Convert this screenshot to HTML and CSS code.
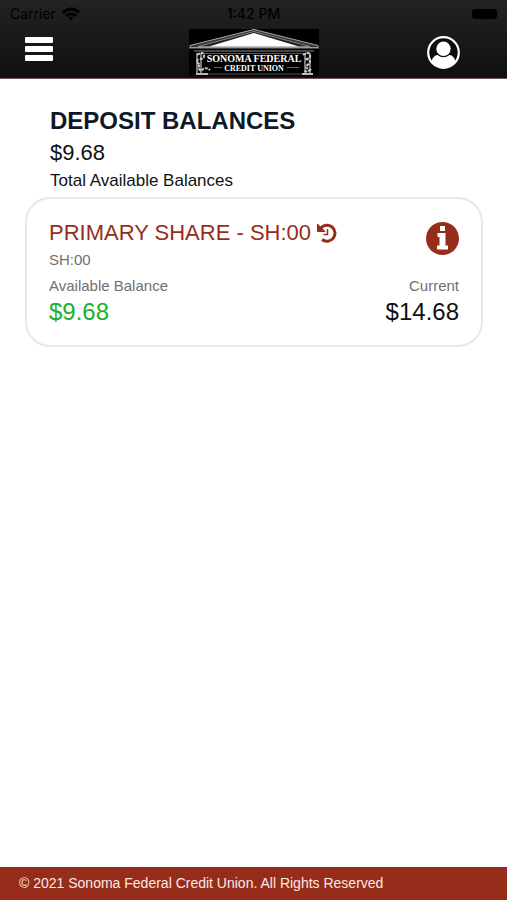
FILE: index.html
```html
<!DOCTYPE html>
<html lang="en">
<head>
    <meta charset="UTF-8">
    <meta name="viewport" content="width=device-width, initial-scale=1.0">
    <title>Sonoma Federal Credit Union</title>
    <link rel="stylesheet" href="styles.css">
</head>
<body>
    <header class="header">
        <div class="status-bar">
            <div class="carrier">
                <span>Carrier</span>
                <svg width="18" height="14" viewBox="0 0 18 14" fill="none" stroke="#000" stroke-width="3">
                    <path d="M1 5.5Q9-1.5 17 5.5"/>
                    <path d="M4 9Q9 4.500 14 9"/>
                    <path d="M6.500 10.500Q9 8.500 11.500 10.500L9 13.500Z" fill="#000" stroke="none"/>
                </svg>
            </div>
            <span class="clock">1:42 PM</span>
            <div class="battery-wrap"><span class="battery"></span></div>
        </div>
        <nav class="nav">
            <button class="icon-btn menu-btn" aria-label="Menu">
                <svg width="28" height="24" viewBox="0 0 28 24" fill="#fff">
                    <rect width="28" height="6" rx="1"/>
                    <rect y="9" width="28" height="6" rx="1"/>
                    <rect y="18" width="28" height="6" rx="1"/>
                </svg>
            </button>
            <a class="logo" href="#" aria-label="Sonoma Federal Credit Union">
                <svg width="130" height="47" viewBox="0 0 130 47">
                    <rect width="130" height="47" fill="#000"/>
                    <path d="M65 .5L1 16.500V18.500H129V16.500Z" fill="#333" stroke="#aaa"/>
                    <path d="M65 2.500L9 17.500H121Z" fill="#222" stroke="#999" stroke-width=".8"/>
                    <path d="M65 4L20 17.500H110Z" fill="#fff"/>
                    <path d="M0 19H130M5 22H125" stroke="#888"/>
                    <path d="M9 24.500H121" stroke="#555"/>
                    <path d="M8 24V44M12 24V44M116 24V44M121 24V44" stroke="#777" stroke-width="2"/>
                    <path d="M8 26q6-4 7 0t-5 4q-5 3 1 5q-3 4 1 7q4-5 9-1M114 26q6-4 7 0t-5 4q7 1 4 5q-6 3 1 6q-4 3-6 0" fill="none" stroke="#ccc" stroke-width="2" stroke-dasharray="3 1"/>
                    <path d="M7 45H19M113 45H124" stroke="#bbb" stroke-width="2"/>
                    <path d="M19 45H113" stroke="#555"/>
                    <path d="M25 38.500H33M98 38.500H110" stroke="#666"/>
                    <text class="logo-name" x="65" y="33">SONOMA FEDERAL</text>
                    <text class="logo-sub" x="65" y="42">CREDIT UNION</text>
                </svg>
            </a>
            <button class="icon-btn profile-btn" aria-label="Profile">
                <svg width="33" height="33" viewBox="0 0 33 33">
                    <circle cx="16.500" cy="16.500" r="15.300" fill="#0c0c0c" stroke="#fff" stroke-width="2.200"/>
                    <circle cx="16.500" cy="12.800" r="7.200" fill="#fff"/>
                    <path d="M4.500 25.500Q6 19.500 10.500 19Q16.500 23.500 22.500 19Q27 19.500 28.500 25.500Q24 31.500 16.500 31.500T4.500 25.500Z" fill="#fff"/>
                </svg>
            </button>
        </nav>
    </header>

    <main class="content">
        <section class="summary">
            <h1>DEPOSIT BALANCES</h1>
            <div class="total">$9.68</div>
            <div class="total-label">Total Available Balances</div>
        </section>

        <section class="card">
            <div class="card-top">
                <div>
                    <a class="account" href="#">
                        PRIMARY SHARE - SH:00
                        <svg width="20" height="20" viewBox="0 0 20 20" fill="none" stroke="currentColor">
                            <path d="M3.500 5.500A8 8 0 1 1 5 16.500" stroke-width="3"/>
                            <path d="M.5 1V8.500H8Z" fill="currentColor" stroke-width="1"/>
                            <path d="M10.500 6V11.500H6.500" stroke-width="1.500"/>
                        </svg>
                    </a>
                    <div class="label">SH:00</div>
                </div>
                <button class="icon-btn info-btn" aria-label="Account details">
                    <svg width="33" height="33" viewBox="0 0 33 33">
                        <circle cx="16.500" cy="16.500" r="16.500" fill="currentColor"/>
                        <path d="M14 4h5v5h-5zM11.500 11H19.500V23.500H22V27.500H11V23.500H13.500V15H11.500Z" fill="#fff"/>
                    </svg>
                </button>
            </div>
            <div class="balances">
                <div>
                    <div class="label">Available Balance</div>
                    <div class="amount available">$9.68</div>
                </div>
                <div class="current">
                    <div class="label">Current</div>
                    <div class="amount">$14.68</div>
                </div>
            </div>
        </section>
    </main>

    <footer class="footer">© 2021 Sonoma Federal Credit Union. All Rights Reserved</footer>
</body>
</html>
```
FILE: styles.css
```css
* {
    margin: 0;
    padding: 0;
    box-sizing: border-box;
}

body {
    min-height: 100vh;
    display: flex;
    flex-direction: column;
    background: #fff;
    color: #111;
    font-family: "Liberation Sans", Arial, sans-serif;
}

svg {
    display: block;
}

.header {
    background: linear-gradient(#232323, #0f0f0f);
    border-bottom: 1px solid #6b5555;
}

.status-bar {
    display: grid;
    grid-template-columns: 1fr auto 1fr;
    align-items: center;
    height: 27px;
    padding: 0 10px;
    color: #000;
    font-family: Inter, sans-serif;
    font-size: 14px;
}

.carrier {
    display: flex;
    align-items: center;
    gap: 6px;
}

.clock {
    font-weight: 500;
}

.battery-wrap {
    display: flex;
    justify-content: flex-end;
}

.battery {
    width: 25px;
    height: 10px;
    border-radius: 3px;
    background: #000;
}

.nav {
    display: grid;
    grid-template-columns: 1fr 130px 1fr;
    align-items: center;
    height: 51px;
    padding: 0 25px;
}

.icon-btn {
    border: none;
    background: none;
    cursor: pointer;
}

.menu-btn {
    justify-self: start;
    padding-bottom: 8px;
}

.profile-btn {
    justify-self: end;
    margin-right: 22px;
}

.logo-name,
.logo-sub {
    fill: #fff;
    font-family: "Liberation Serif", serif;
    font-weight: bold;
    text-anchor: middle;
}

.logo-name {
    font-size: 10px;
}

.logo-sub {
    font-size: 8px;
}

.content {
    flex: 1;
    padding: 26px 24px 26px 25px;
}

.summary {
    padding: 0 25px;
}

.summary h1 {
    color: #101828;
    font-size: 24px;
    line-height: 32px;
}

.total {
    font-size: 22px;
    line-height: 32px;
}

.total-label {
    font-size: 17px;
    line-height: 24px;
}

.card {
    margin-top: 4px;
    padding: 20px 22px;
    border: 2px solid #e8e8e8;
    border-radius: 25px;
}

.card-top,
.balances {
    display: flex;
    justify-content: space-between;
}

.account {
    display: flex;
    align-items: center;
    gap: 6px;
    color: #962d1a;
    font-size: 22px;
    line-height: 28px;
    text-decoration: none;
}

.label {
    color: #707070;
    font-size: 15px;
    line-height: 26px;
}

.info-btn {
    align-self: flex-start;
    margin-top: 3px;
    color: #962d1a;
}

.amount {
    font-size: 24px;
    line-height: 26px;
}

.available {
    color: #22b02a;
}

.current {
    text-align: right;
}

.footer {
    padding: 6px 19px;
    background: #962d1a;
    color: #fbe9e4;
    font-size: 14px;
    line-height: 21px;
}
```
